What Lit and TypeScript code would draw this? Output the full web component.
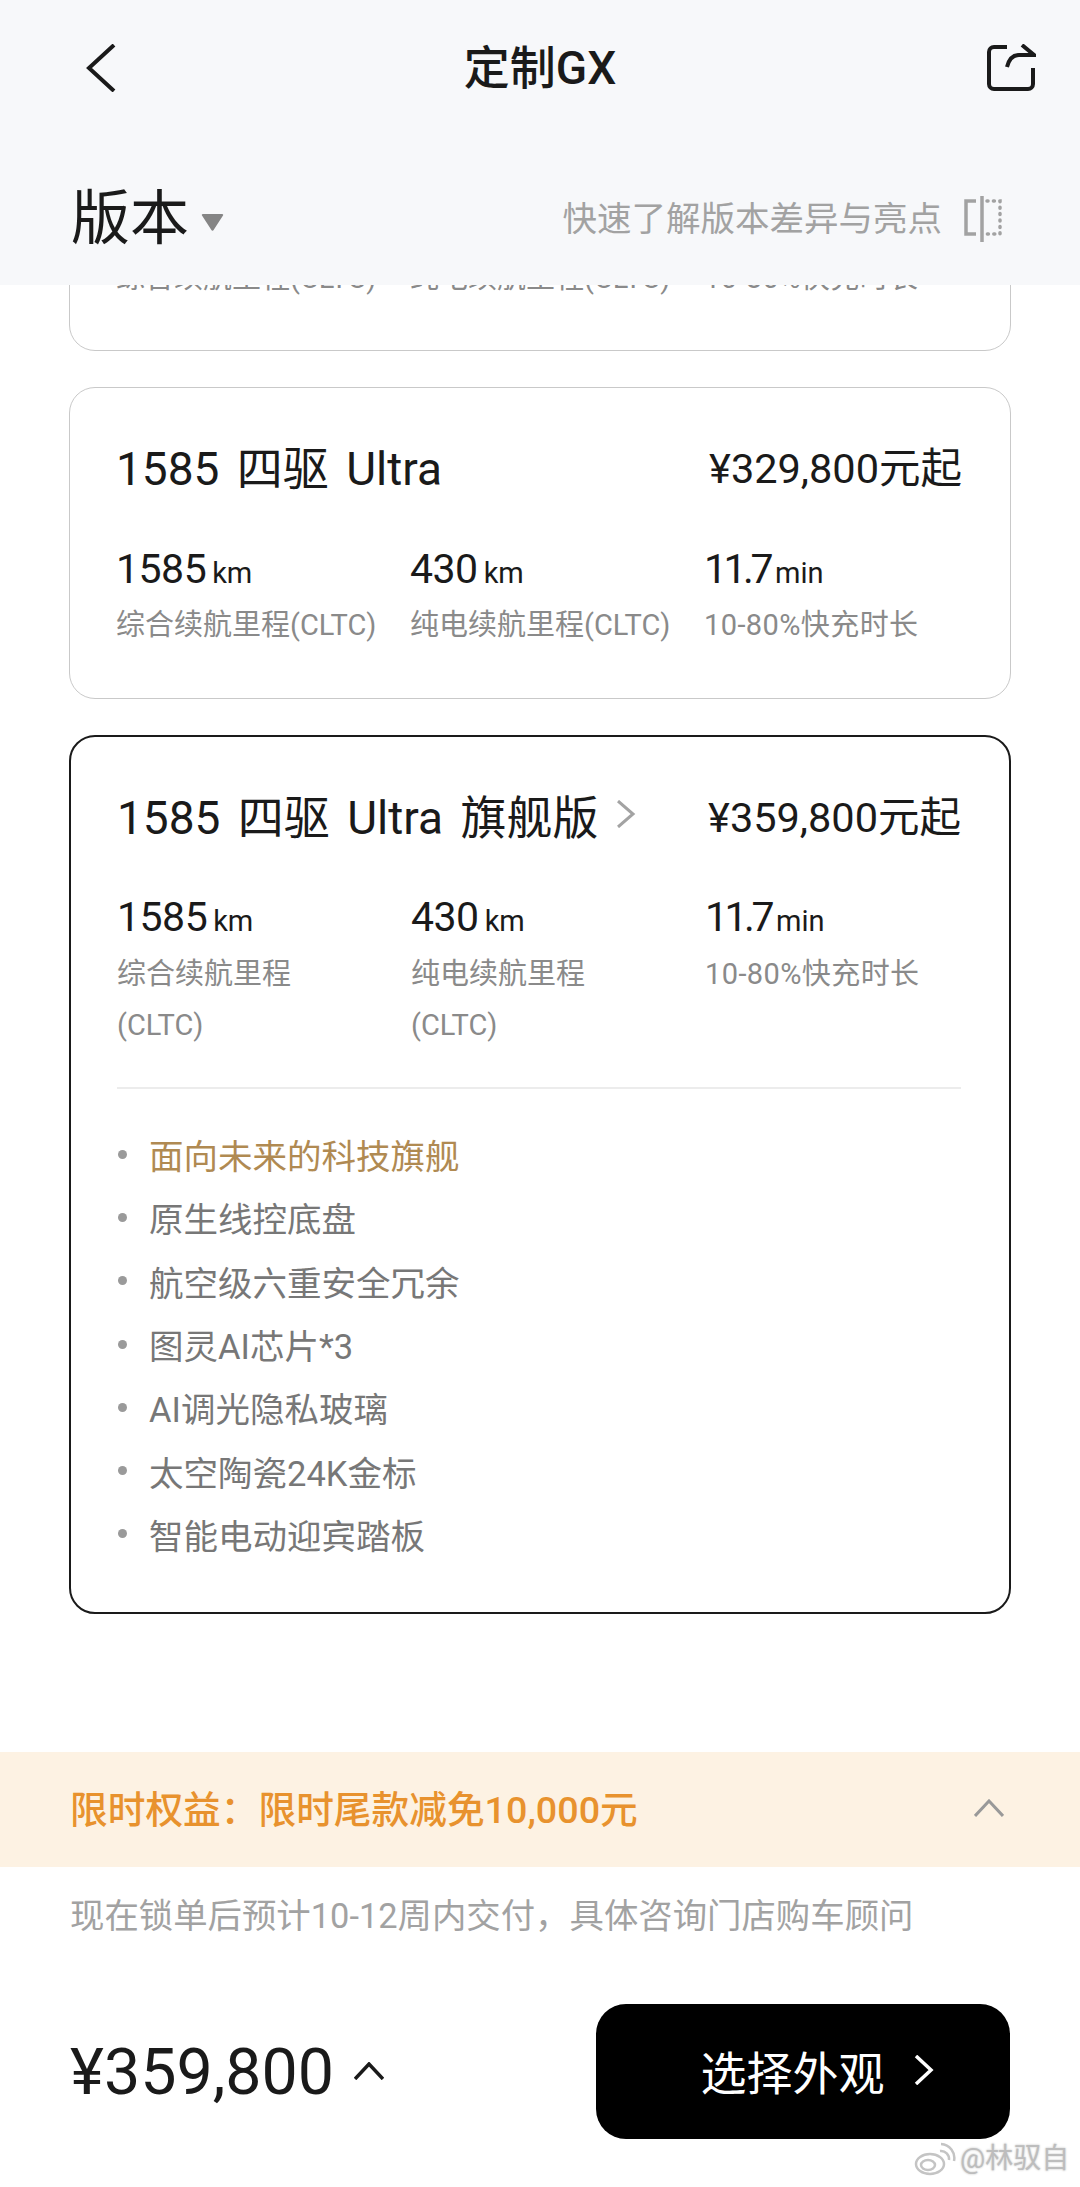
import { LitElement, html, css } from 'lit';
import { customElement } from 'lit/decorators.js';

const FONT = css`Roboto, 'Noto Sans CJK SC', sans-serif`;

const CARDS = [
  { name: '', price: '', kind: 'partial' },
  { name: '1585 四驱 Ultra', price: '¥329,800元起', kind: 'plain' },
  { name: '1585 四驱 Ultra 旗舰版', price: '¥359,800元起', kind: 'featured' },
];

const PERKS = [
  '原生线控底盘',
  '航空级六重安全冗余',
  '图灵AI芯片*3',
  'AI调光隐私玻璃',
  '太空陶瓷24K金标',
  '智能电动迎宾踏板',
];

@customElement('app-root')
export class AppRoot extends LitElement {
  static styles = css`
    :host {
      display: flex;
      flex-direction: column;
      position: relative;
      width: 1080px;
      height: 2187px;
      background: #fff;
      color: #1a1a1a;
      font-family: ${FONT};
      overflow: hidden;
    }
    svg {
      display: block;
      fill: none;
    }

    /* top bar */
    .top {
      flex: none;
      height: 285px;
      box-sizing: border-box;
      padding: 44px 44px 0;
      background: #f7f8fa;
    }
    .nav {
      display: grid;
      grid-template-columns: 1fr auto 1fr;
      align-items: center;
      height: 48px;
    }
    .nav .back {
      margin-left: 42px;
    }
    .nav .share {
      justify-self: end;
    }
    .nav h1 {
      margin: 0;
      font-size: 46px;
      font-weight: 500;
      line-height: 48px;
    }
    .version {
      display: flex;
      align-items: center;
      margin: 92px 0 0 27px;
      height: 70px;
    }
    .version h2 {
      margin: 0;
      font-size: 59px;
      font-weight: 400;
      line-height: 70px;
    }
    .version .caret {
      margin-left: 12px;
      margin-top: 6px;
    }
    .hint {
      margin-left: auto;
      margin-right: 34px;
      display: flex;
      align-items: center;
      gap: 22px;
      font-size: 34.5px;
      line-height: 46px;
      color: #a2a2a2;
    }

    /* card list */
    .list {
      flex: 1;
      min-height: 0;
      overflow: hidden;
      display: flex;
      flex-direction: column;
      gap: 36px;
      padding: 0 69px;
    }
    .card {
      flex: none;
      box-sizing: border-box;
      height: 312px;
      padding: 0 48px 0 46px;
      border: 1.5px solid #c9c9c9;
      border-radius: 26px;
    }
    /* scrolled up behind the header, only its labels peek out */
    .card.partial {
      margin-top: -246px;
      padding-top: 213px;
    }
    .card.featured {
      height: 879px;
      border: 2px solid #1a1a1a;
    }
    .head {
      display: flex;
      justify-content: space-between;
      align-items: center;
      height: 50px;
      margin-top: 52px;
    }
    .name {
      display: flex;
      align-items: center;
      font-size: 46px;
      word-spacing: 6px;
      white-space: nowrap;
    }
    .name svg {
      margin-left: 18px;
    }
    .price {
      font-size: 41.5px;
    }
    .stats {
      display: grid;
      grid-template-columns: 294px 294px 1fr;
      margin-top: 54px;
    }
    .partial .stats {
      margin-top: 0;
    }
    .featured .stats {
      margin-top: 53px;
    }
    .value {
      font-size: 41px;
      line-height: 50px;
      letter-spacing: -0.5px;
      white-space: nowrap;
    }
    .value.tight {
      letter-spacing: -3.5px;
    }
    .unit {
      font-size: 29px;
      letter-spacing: 0;
      margin-left: 6px;
    }
    .tight .unit {
      margin-left: 5px;
    }
    .label {
      font-size: 29px;
      line-height: 51px;
      color: #8a8a8a;
      margin-top: 2px;
    }
    .partial .label {
      margin-top: 0;
    }
    .label.wide {
      letter-spacing: 0.4px;
    }
    .featured .label {
      width: 200px;
      margin-top: 3px;
    }
    .featured .label.wide {
      width: auto;
    }
    .rule {
      height: 1.5px;
      background: #ececec;
      margin-top: 36px;
    }
    .perks {
      list-style: none;
      margin: 34px 0 0;
      padding: 0 0 0 1px;
    }
    .perks li {
      display: flex;
      align-items: center;
      gap: 22px;
      height: 63.3px;
      font-size: 34.5px;
      color: #777;
    }
    .perks li::before {
      content: '';
      width: 9px;
      height: 9px;
      border-radius: 50%;
      background: #9a9a9a;
    }
    .perks li.gold {
      color: #b08a52;
    }

    /* offer banner */
    .offer {
      flex: none;
      display: flex;
      justify-content: space-between;
      align-items: center;
      height: 115px;
      box-sizing: border-box;
      padding: 0 76px 0 70px;
      background: #fdf2e3;
      color: #e8922e;
      font-size: 37.7px;
      font-weight: 500;
    }
    .offer span {
      margin-bottom: 6px;
    }
    .offer svg {
      margin-bottom: 3px;
    }
    .delivery {
      flex: none;
      margin: 27px 0 0 70px;
      font-size: 34.4px;
      line-height: 44px;
      color: #a2a2a2;
    }

    /* bottom bar */
    .bar {
      flex: none;
      display: flex;
      align-items: center;
      height: 135px;
      margin: 66px 70px 48px 70px;
    }
    .total {
      font-size: 64.5px;
    }
    .bar .up {
      margin-left: 20px;
      margin-top: -2px;
    }
    .cta {
      margin-left: auto;
      display: flex;
      align-items: center;
      justify-content: center;
      gap: 29px;
      width: 414px;
      height: 135px;
      box-sizing: border-box;
      padding: 0 0 3px 28px;
      border-radius: 30px;
      background: #000;
      color: #fff;
      font-size: 46px;
    }

    /* watermark over the page */
    .mark {
      position: absolute;
      left: 914px;
      top: 2142px;
      display: flex;
      align-items: center;
      gap: 4px;
      font-size: 28px;
      line-height: 34px;
      color: #bdbdbd;
      text-shadow: 0 0 3px #fff, 0 0 2px #999;
    }
  `;

  private card(c: { name: string; price: string; kind: string }) {
    const featured = c.kind === 'featured';
    const partial = c.kind === 'partial';
    return html`
      <section class="card ${c.kind}">
        ${partial
          ? ''
          : html`<div class="head">
              <div class="name">
                <span>${c.name}</span>
                ${featured
                  ? html`<svg width="20" height="28" viewBox="0 0 20 28" stroke="#a3a3a3" stroke-width="3">
                      <path d="M2 1l15 13L2 27" />
                    </svg>`
                  : ''}
              </div>
              <div class="price">${c.price}</div>
            </div>`}
        <div class="stats">
          <div>
            ${partial ? '' : html`<div class="value">1585<span class="unit">km</span></div>`}
            <div class="label">综合续航里程(CLTC)</div>
          </div>
          <div>
            ${partial ? '' : html`<div class="value">430<span class="unit">km</span></div>`}
            <div class="label">纯电续航里程(CLTC)</div>
          </div>
          <div>
            ${partial ? '' : html`<div class="value tight">11.7<span class="unit">min</span></div>`}
            <div class="label wide">10-80%快充时长</div>
          </div>
        </div>
        ${featured
          ? html`<div class="rule"></div>
              <ul class="perks">
                <li class="gold">面向未来的科技旗舰</li>
                ${PERKS.map((p) => html`<li>${p}</li>`)}
              </ul>`
          : ''}
      </section>
    `;
  }

  render() {
    return html`
      <header class="top">
        <div class="nav">
          <svg class="back" width="30" height="48" viewBox="0 0 30 48" stroke="#1a1a1a" stroke-width="4">
            <path d="M28 1L3 24l25 23" />
          </svg>
          <h1>定制GX</h1>
          <svg class="share" width="50" height="48" viewBox="0 0 50 48" stroke="#1a1a1a" stroke-width="4">
            <path d="M21 3H8a5 5 0 0 0-5 5v32a5 5 0 0 0 5 5h34a5 5 0 0 0 5-5V24" />
            <path d="M36 1l12 10H33c-6 0-10 4-12 12" />
          </svg>
        </div>
        <div class="version">
          <h2>版本</h2>
          <svg class="caret" width="23" height="19" viewBox="0 0 23 19">
            <path d="M2 1h19a1 1 0 0 1 1 1.6L12.6 17a1.2 1.2 0 0 1-2.2 0L1 2.6A1 1 0 0 1 2 1z" fill="#858585" />
          </svg>
          <div class="hint">
            <span>快速了解版本差异与亮点</span>
            <svg width="38" height="46" viewBox="0 0 38 46" stroke="#a2a2a2" stroke-width="3.5">
              <path d="M12 5H2v33h10" />
              <path d="M18 0v46" />
              <path d="M23 5h13v33H23" stroke-dasharray="1 5.4" stroke-linecap="round" />
            </svg>
          </div>
        </div>
      </header>

      <main class="list">${CARDS.map((c) => this.card(c))}</main>

      <div class="offer">
        <span>限时权益\uFF1A限时尾款减免10,000元</span>
        <svg width="30" height="18" viewBox="0 0 30 18" stroke="#999" stroke-width="3">
          <path d="M1 17L15 2l14 15" />
        </svg>
      </div>
      <div class="delivery">现在锁单后预计10-12周内交付\uFF0C具体咨询门店购车顾问</div>

      <footer class="bar">
        <div class="total">¥359,800</div>
        <svg class="up" width="30" height="18" viewBox="0 0 30 18" stroke="#1a1a1a" stroke-width="3.5">
          <path d="M1 17L15 2l14 15" />
        </svg>
        <div class="cta">
          <span>选择外观</span>
          <svg width="20" height="30" viewBox="0 0 20 30" stroke="#fff" stroke-width="3.5">
            <path d="M2 1l15 14L2 29" />
          </svg>
        </div>
      </footer>

      <div class="mark">
        <svg width="42" height="34" viewBox="0 0 42 34" stroke="#c4c4c4" stroke-width="2.5">
          <ellipse cx="16" cy="22" rx="14" ry="10" />
          <ellipse cx="14" cy="23" rx="7" ry="5" />
          <path d="M26 9a8 8 0 0 1 9 9" />
          <path d="M27 2a14 14 0 0 1 13 17" />
        </svg>
        <span>@林驭自</span>
      </div>
    `;
  }
}
